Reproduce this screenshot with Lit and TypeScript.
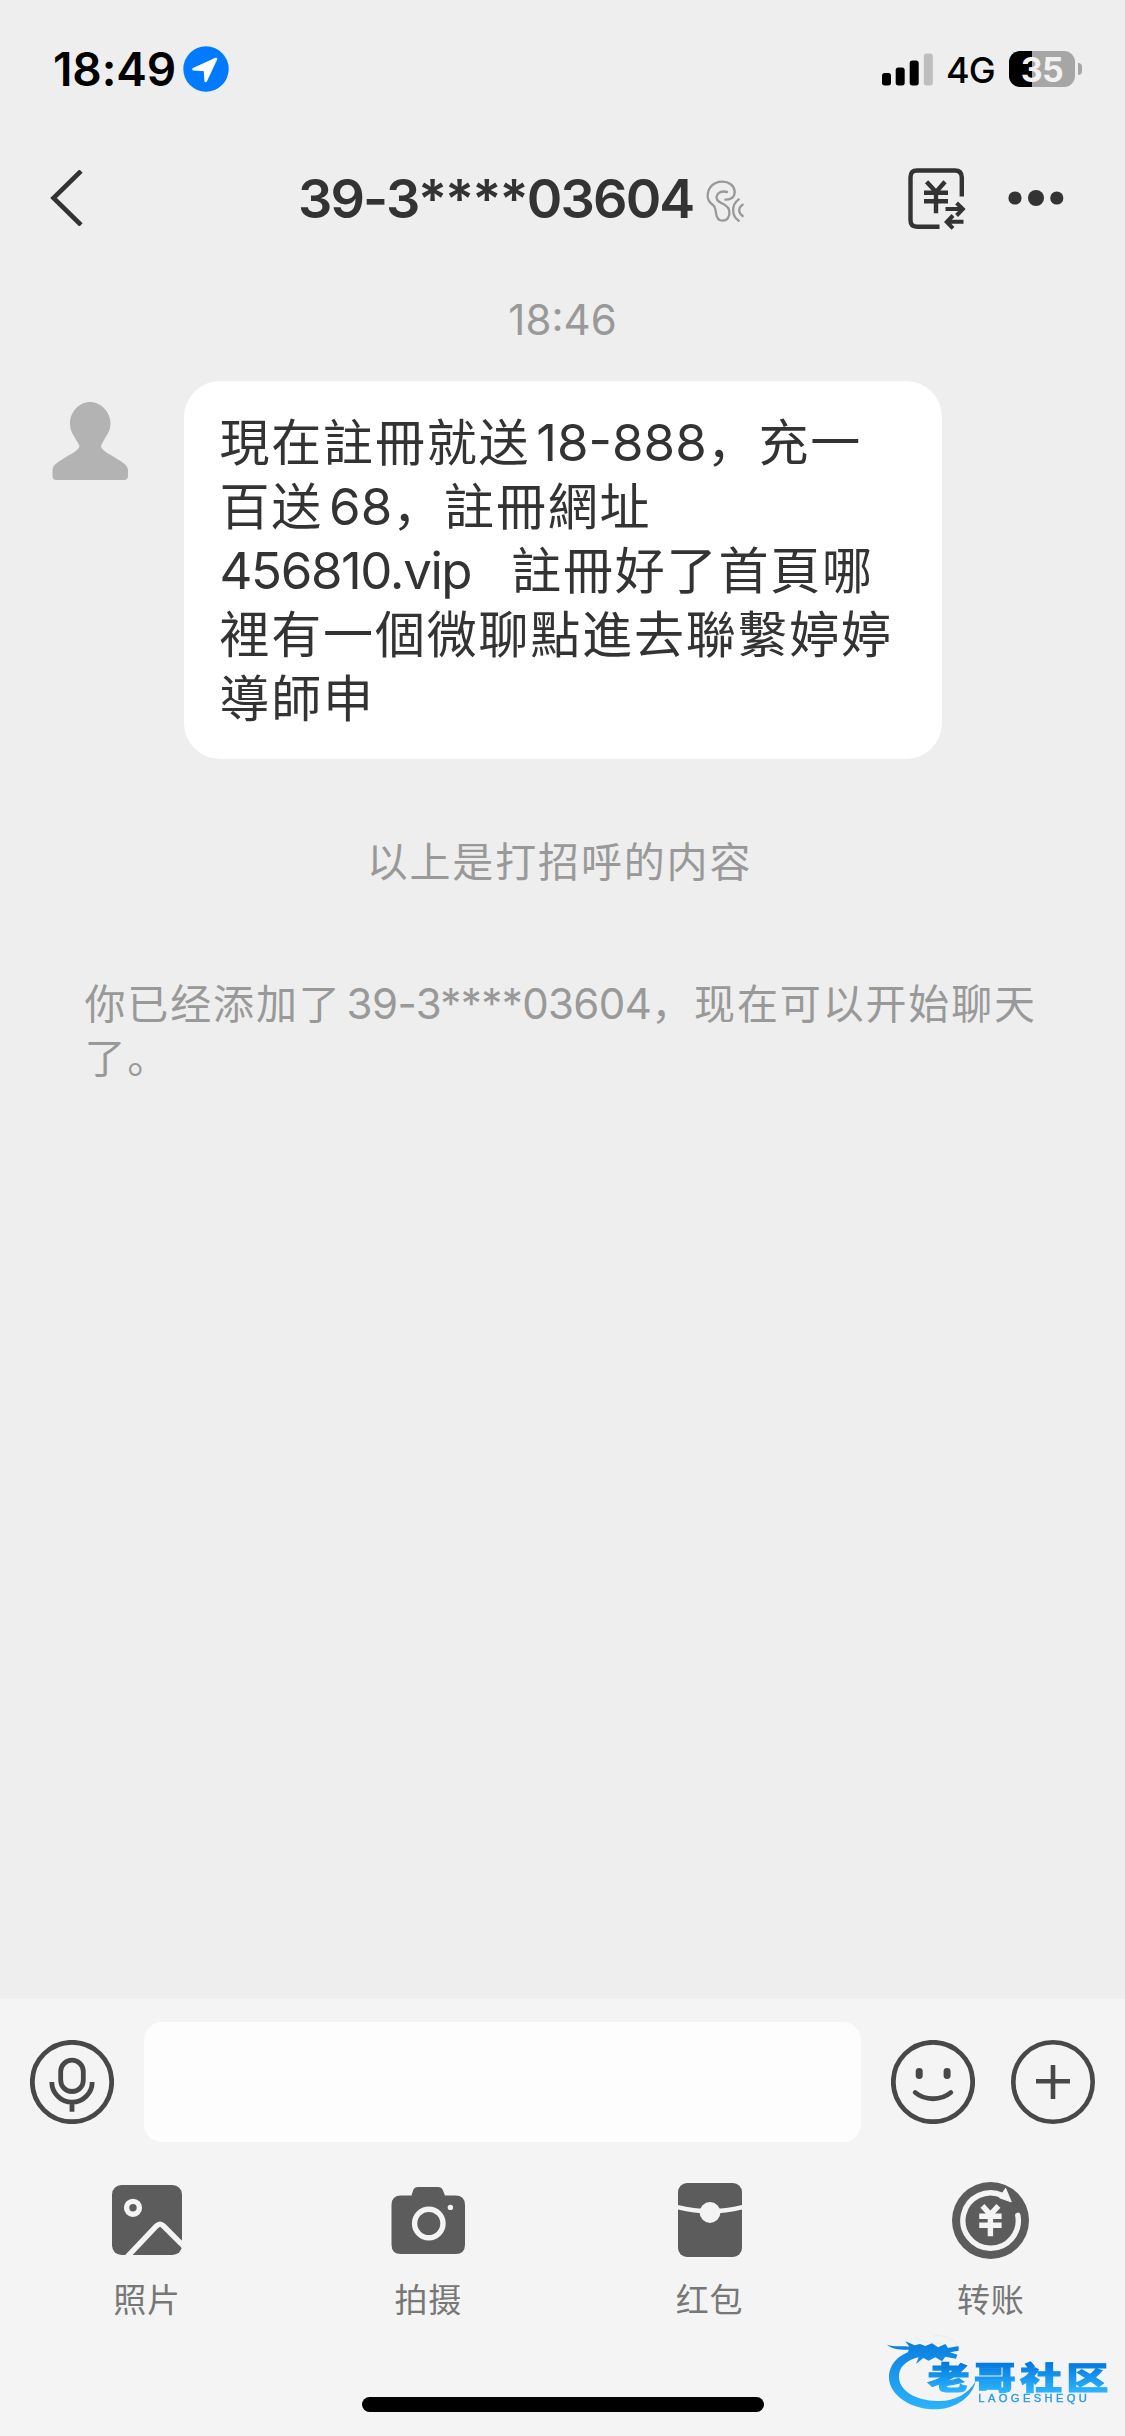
import { LitElement, html, svg, css } from "lit";
import { customElement } from "lit/decorators.js";

const backIcon = html`<svg class="back" width="34" height="56" viewBox="0 0 34 56" fill="none" stroke="#333" stroke-width="4.6"><path d="M31 1L3.500 28L31 55"/></svg>`;

const earIcon = html`<svg class="ear" width="38.7" height="42" viewBox="76 88 116 126" fill="none" stroke="#999" stroke-width="7" stroke-linecap="round">
  <path d="M134 147C152 148 163 138 162 122C160 104 145 93 125 93C98 93 80 112 81 138C82 150 87 156 96 162C104 168 105 175 106 188C108 202 115 210 126 210C140 210 148 197 146 182C145 168 134 163 124 158C110 152 106 145 108 137C111 125 124 120 139 124"/>
  <path d="M174 146C152 162 152 195 174 210M186 162C172 172 172 185 186 196"/></svg>`;

const payIcon = html`<svg class="pay" width="60" height="64" viewBox="0 0 60 64" fill="none" stroke="#333" stroke-width="4.4">
  <path d="M53.800 28.500V9.500Q53.800 2.500 46.800 2.500H9Q2.500 2.500 2.500 9.500V52Q2.500 58.700 9 58.700H31.500"/>
  <path d="M18.6 13.7L28 24L37 13.7M16 24.7H40M16 33.3H40M28 23V45.3"/>
  <path stroke-width="4" d="M37.5 41H55M48.600 35L54.800 41L48.600 47.5M55.500 53.7H38.500M45 47.5L38.800 54L45 60.3"/></svg>`;

const moreIcon = html`<svg width="56" height="18" viewBox="0 0 56 18" fill="#333"><circle cx="7" cy="9" r="6.6"/><circle cx="28" cy="9" r="8"/><circle cx="48.8" cy="9" r="6.6"/></svg>`;

const avatarIcon = html`<svg class="avatar" width="77" height="78" viewBox="0 0 77 78" fill="#b3b3b3"><path d="M38 0C27 0 18 10 18 21.5C18 31 24 36 27.5 44C26.5 49 20 51 10 57.5C3 62 .5 64 .5 69V74Q.5 78 4.5 78H72Q76 78 76 74V69C76 64 73 62 66 57.5C56 51 50 49 49 44C52 36 58.5 31 58.5 21.5C58.5 10 49 0 38 0Z"/></svg>`;

const ring = svg`<circle cx="42" cy="42" r="39.7"/>`;
const micIcon = html`<svg width="84" height="84" viewBox="0 0 84 84" fill="none" stroke="#484848" stroke-width="4.8">${ring}
  <rect x="30.7" y="20.2" width="22.6" height="31.3" rx="11.3"/><path d="M21.8 42A20.2 20.2 0 0 0 62.2 42M42 62V71.7"/></svg>`;
const smileIcon = html`<svg width="84" height="84" viewBox="0 0 84 84" fill="none" stroke="#484848" stroke-width="4.8">${ring}
  <path d="M24.2 52.5C34 60.8 50 60.8 59.8 52.5" stroke-linecap="round"/>
  <g fill="#484848" stroke="none"><rect x="24.7" y="28" width="7" height="11" rx="3.4"/><rect x="52.6" y="28" width="7" height="11" rx="3.4"/></g></svg>`;
const plusIcon = html`<svg width="84" height="84" viewBox="0 0 84 84" fill="none" stroke="#484848" stroke-width="4.6">${ring}
  <path d="M25 41.2H59M42 25V59"/></svg>`;

const photoIcon = html`<svg width="70" height="70" viewBox="0 0 70 70"><rect width="70" height="70" rx="9.5" fill="#5c5c5c"/>
  <g fill="none" stroke="#f4f4f4" stroke-width="5.4"><circle cx="21" cy="22.8" r="6.4"/>
  <path d="M14.5 72.5L44.5 41Q48 37.5 51.5 41L74 63.5"/></g></svg>`;
const cameraIcon = html`<svg width="74" height="67" viewBox="0 0 74 67"><path fill="#5c5c5c" d="M27 0H47Q50.500 0 51.800 3L54 8.500H64.500Q74 8.500 74 18V57.500Q74 67 64.500 67H10Q.500 67 .500 57.500V18Q.500 8.500 10 8.500H20.500L22.200 3Q23.500 0 27 0Z"/>
  <circle cx="37.800" cy="36.500" r="14.200" fill="none" stroke="#f4f4f4" stroke-width="5.400"/><circle cx="59.400" cy="20.400" r="2.700" fill="#f4f4f4"/></svg>`;
const packetIcon = html`<svg width="64" height="74" viewBox="0 0 64 74"><rect width="64" height="74" rx="9" fill="#5c5c5c"/>
  <path d="M-1 24Q32 32.500 65 24" fill="none" stroke="#f4f4f4" stroke-width="4.300"/><circle cx="32" cy="29.500" r="10.400" fill="#f4f4f4"/></svg>`;
const transferIcon = html`<svg width="77" height="77" viewBox="0 0 77 77"><circle cx="38.500" cy="38.500" r="38.500" fill="#5c5c5c"/>
  <g fill="none" stroke="#f4f4f4" stroke-width="5.400"><path stroke-linecap="round" d="M65.800 33.300A27.700 27.700 0 1 1 50.500 13.500"/>
  <path d="M30.400 23.800L38.400 32.500L46.400 23.800M27.200 34.300H49.600M27.200 43.200H49.600M38.400 31.500V54.200"/></g>
  <path d="M53.600 6.300L59.300 19.900L47.500 15.800Z" fill="#f4f4f4" stroke="#f4f4f4" stroke-width="1" stroke-linejoin="round"/></svg>`;

const ACTIONS = [
  { label: "照片", icon: photoIcon },
  { label: "拍摄", icon: cameraIcon },
  { label: "红包", icon: packetIcon },
  { label: "转账", icon: transferIcon },
];

@customElement("app-root")
export class AppRoot extends LitElement {
  static styles = css`
    :host { display: block; }
    * { box-sizing: border-box; }
    svg { display: block; flex: none; }
    .screen {
      position: relative; display: flex; flex-direction: column; width: 1125px; height: 2436px; overflow: hidden;
      background: #eee; color: #333; font-family: Inter, "Noto Sans CJK SC", sans-serif;
      text-autospace: no-autospace; white-space: nowrap;
    }
    .status { display: flex; align-items: center; height: 138px; padding: 0 43px 0 53px; color: #000; }
    .time { width: 130px; font-size: 46px; font-weight: 600; line-height: 60px; letter-spacing: -0.1px; }
    .bars { margin-left: auto; }
    .net { width: 61px; padding-left: 13px; font-size: 36px; font-weight: 450; line-height: 46px; letter-spacing: -0.8px; padding-top: 2px; }
    .battery {
      width: 66px; height: 36px; margin-left: 15px; border-radius: 11px; color: #f2f2f2; text-align: center;
      background: linear-gradient(90deg, #000 23px, #a6a6a6 23px);
      font-size: 34px; font-weight: 700; line-height: 37px; letter-spacing: -0.5px;
    }
    .nub { width: 4px; height: 12px; margin-left: 3px; border-radius: 0 5px 5px 0; background: #a6a6a6; }
    .nav { display: flex; align-items: center; height: 120px; padding: 0 61.500px 0 50px; }
    .title { width: 407.500px; margin-left: 214px; padding-top: 1px; font-size: 54px; font-weight: 600; line-height: 70px; letter-spacing: -1.9px; }
    .ear { margin-top: 5px; }
    .pay { margin-left: auto; margin-right: 39.500px; margin-top: 4px; }
    .chat { flex: 1; color: #999; font-size: 42px; }
    .stamp { margin-top: 37px; line-height: 50px; text-align: center; }
    .row { display: flex; align-items: flex-start; margin-top: 36px; padding-left: 52px; }
    .avatar { margin-top: 21px; }
    .bubble {
      width: 758px; height: 378px; margin-left: 54.500px; padding: 30px 36px; border-radius: 36px; background: #fff; color: #333;
      font-size: 50px; line-height: 64px; letter-spacing: 1.800px;
    }
    .line { height: 64px; }
    .num { font-size: 51px; letter-spacing: 0; }
    .gap { margin-left: 6px; }
    .url { margin-right: 40px; letter-spacing: -1.400px; }
    .hello { margin-top: 76px; padding-right: 6px; line-height: 54px; text-align: center; font-size: 41px; letter-spacing: 1.850px; }
    .added { margin-top: 88px; padding-left: 84.500px; line-height: 54px; font-size: 41px; letter-spacing: 1.850px; }
    .added .line { height: 54px; }
    .added .num { font-size: 42px; margin-left: 5px; letter-spacing: -0.600px; }
    .panel { height: 437px; background: #f4f4f4; padding-top: 23px; }
    .compose { display: flex; align-items: center; padding: 0 30px; }
    .input { width: 717px; height: 120px; margin: 0 30px; border-radius: 18px; background: #fdfdfd; }
    .plus { margin-left: 36px; }
    .actions { display: grid; grid-template-columns: repeat(4, 281.300px); padding: 39.500px 0 0 6.300px; }
    .action { display: flex; flex-direction: column; align-items: center; color: #777; font-size: 33px; line-height: 44px; letter-spacing: 0.8px; }
    .pic { display: flex; align-items: center; height: 77px; margin-bottom: 19px; }
    .home { width: 402px; height: 15px; margin: 75.500px auto 0; border-radius: 8px; background: #000; }
    .mark { position: absolute; left: 870px; top: 2320px; filter: blur(0.5px); }
  `;

  private action(a: (typeof ACTIONS)[number]) {
    return html`<div class="action"><div class="pic">${a.icon}</div><div>${a.label}</div></div>`;
  }

  render() {
    return html`<div class="screen">
      <div class="status">
        <div class="time">18:49</div>
        <svg width="46" height="46" viewBox="0 0 46 46"><circle cx="23" cy="23" r="22.700" fill="#007aff"/><path d="M33 13L22.700 35L22 24L10.500 23.300Z" fill="#fff" stroke="#fff" stroke-width="2.600" stroke-linejoin="round"/></svg>
        <svg class="bars" width="51" height="33" viewBox="0 0 51 33"><rect y="20" width="9" height="12.500" rx="2.700"/><rect x="13.700" y="14.500" width="9" height="18" rx="2.700"/><rect x="27.700" y="7.500" width="9" height="25" rx="2.700"/><rect x="41.800" y=".500" width="9" height="32" rx="2.700" fill="#bebebe"/></svg>
        <div class="net">4G</div>
        <div class="battery">35</div><div class="nub"></div>
      </div>
      <div class="nav">${backIcon}<div class="title">39-3****03604</div>${earIcon}${payIcon}${moreIcon}</div>
      <div class="chat">
        <div class="stamp">18:46</div>
        <div class="row">${avatarIcon}
          <div class="bubble">
            <div class="line">現在註冊就送<span class="num gap">18-888</span>，充一</div>
            <div class="line">百送<span class="num gap">68</span>，註冊網址</div>
            <div class="line"><span class="num url">456810.vip</span>註冊好了首頁哪</div>
            <div class="line">裡有一個微聊點進去聯繫婷婷</div>
            <div class="line">導師申</div>
          </div>
        </div>
        <div class="hello">以上是打招呼的内容</div>
        <div class="added">
          <div class="line">你已经添加了<span class="num gap">39-3****03604</span>，现在可以开始聊天</div>
          <div class="line">了。</div>
        </div>
      </div>
      <div class="panel">
        <div class="compose">${micIcon}<div class="input"></div>${smileIcon}<div class="plus">${plusIcon}</div></div>
        <div class="actions">${ACTIONS.map((a) => this.action(a))}</div>
        <div class="home"></div>
      </div>
      <svg class="mark" width="255" height="116" viewBox="0 0 765 348">
        <defs>
          <linearGradient id="swoosh" gradientUnits="userSpaceOnUse" x1="0" y1="70" x2="0" y2="265"><stop offset="0" stop-color="#0a7fe0"/><stop offset="1" stop-color="#2bb3fb"/></linearGradient>
          <linearGradient id="word" gradientUnits="userSpaceOnUse" x1="0" y1="-76" x2="0" y2="8"><stop offset="0" stop-color="#0479df"/><stop offset="1" stop-color="#2bb3fd"/></linearGradient>
        </defs>
        <g fill="url(#swoosh)">
          <path d="M128 92C82 104 56 136 57 174C59 226 122 270 202 268C258 265 306 232 317 184C294 224 250 245 202 243C136 242 88 212 87 171C86 142 106 121 150 110Z"/>
          <path d="M51 74C75 82 95 76 118 80L106 64L134 76L150 72L166 78L186 70L204 82L226 72L234 84L266 78L266 92L240 97L262 104L258 116L226 110L216 124L196 112L176 122L160 114L138 132L146 112L112 104L116 89C90 90 64 86 51 74Z"/>
        </g>
        <path d="M132 50C150 66 190 68 214 70M190 48C222 42 256 60 264 80" fill="none" stroke="#dbe8f2" stroke-width="2"/>
        <text transform="translate(173 206) scale(1.360 1)" fill="url(#word)" stroke="url(#word)" stroke-width="3.500" font-family="Noto Sans CJK SC, sans-serif" font-weight="900" font-size="92" textLength="398" lengthAdjust="spacing">老哥社区</text>
        <text x="325" y="247" fill="#2a9aea" stroke="#2a9aea" stroke-width="1" font-family="Liberation Sans, sans-serif" font-size="30" letter-spacing="9" textLength="336" lengthAdjust="spacingAndGlyphs">LAOGESHEQU</text>
      </svg>
    </div>`;
  }
}
